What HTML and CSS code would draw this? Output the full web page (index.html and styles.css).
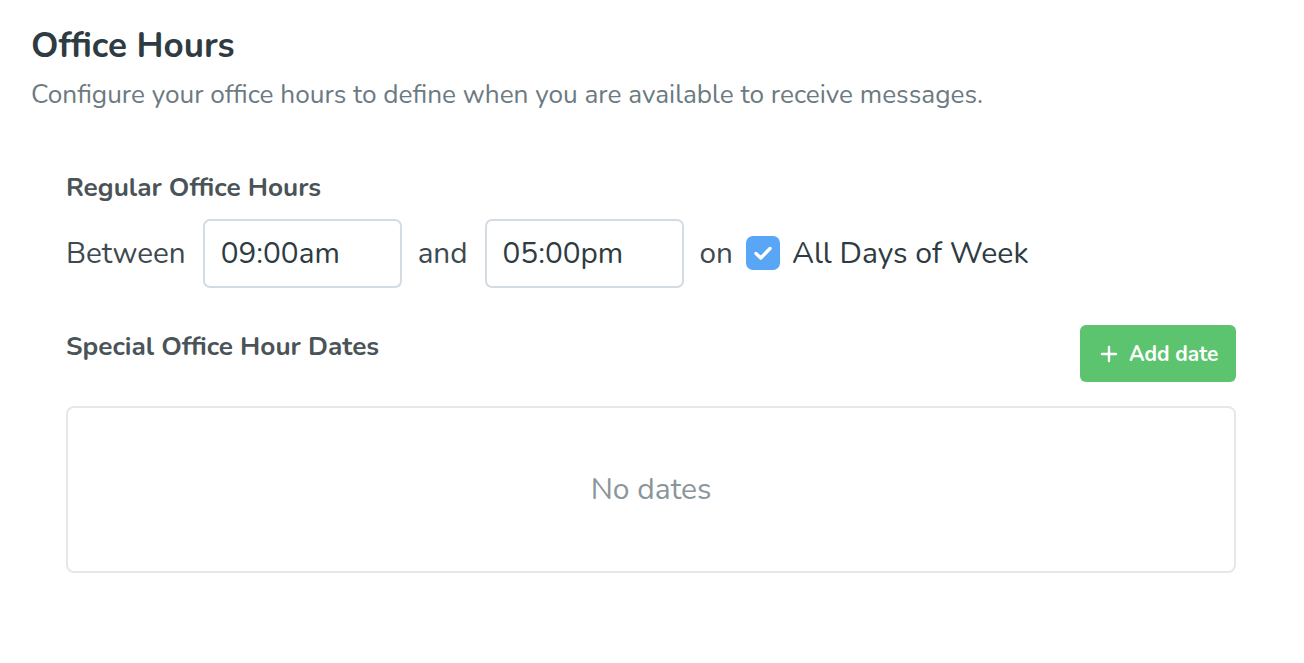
FILE: index.html
```html
<!DOCTYPE html>
<html>
<head>
<meta charset="utf-8">
<link rel="stylesheet" href="styles.css">
</head>
<body>
<div class="page">
  <h1 class="title">Office Hours</h1>
  <p class="desc">Configure your office hours to define when you are available to receive messages.</p>
  <div class="section">
    <h2 class="label">Regular Office Hours</h2>
    <div class="row">
      <span class="word">Between</span>
      <div class="input">09:00am</div>
      <span class="word">and</span>
      <div class="input">05:00pm</div>
      <span class="word">on</span>
      <span class="check"><svg width="28" height="28" viewBox="0 0 28 28"><path d="M7 14.5 L11.8 19 L21 9.5" fill="none" stroke="#fff" stroke-width="3.4" stroke-linecap="round" stroke-linejoin="round"/></svg></span>
      <span class="word days">All Days of Week</span>
    </div>
    <div class="special-head">
      <h2 class="label">Special Office Hour Dates</h2>
      <button class="add"><svg width="18" height="18" viewBox="0 0 18 18"><path d="M9 2 V16 M2 9 H16" stroke="#fff" stroke-width="2.4" stroke-linecap="round"/></svg><span>Add date</span></button>
    </div>
    <div class="empty">No dates</div>
  </div>
</div>
</body>
</html>
```
FILE: styles.css
```css
* { box-sizing: border-box; }
body {
  margin: 0;
  background: #fff;
  font-family: "Nunito", "Lato", "Open Sans", sans-serif;
}
.page {
  padding: 26px 31px 0 31px;
}
.title {
  margin: 0;
  font-size: 35px;
  font-weight: 700;
  color: #2e3b42;
  line-height: 40px;
}
.desc {
  margin: 9px 0 0 0;
  font-size: 26.2px;
  color: #6c7a82;
  line-height: 40px;
}
.section {
  margin: 58px 0 0 35px;
  width: 1170px;
}
.label {
  margin: 0;
  font-size: 26.2px;
  font-weight: 700;
  color: #4a5358;
  line-height: 30px;
}
.row {
  display: flex;
  align-items: center;
  margin-top: 15px;
  height: 70px;
}
.word {
  font-size: 29.7px;
  color: #3e4a50;
}
.input {
  width: 199px;
  height: 69px;
  margin: 0 16px 0 17px;
  border: 2px solid #d3dbe3;
  border-radius: 7px;
  padding: 0 16px;
  display: flex;
  align-items: center;
  font-size: 29.7px;
  color: #2e3b42;
}
.check {
  width: 34px;
  height: 34px;
  border-radius: 7px;
  background: #58a6f5;
  margin: 0 12px 0 13px;
  display: flex;
  align-items: center;
  justify-content: center;
}
.days { color: #2e3b42; font-size: 30.2px; }
.special-head {
  display: flex;
  justify-content: space-between;
  align-items: flex-start;
  margin-top: 37px;
}
.special-head .label { margin-top: 7px; }
.add {
  display: flex;
  align-items: center;
  gap: 11px;
  height: 57px;
  width: 156px;
  padding: 0 0 0 20px;
  border: none;
  border-radius: 6px;
  background: #5cc46f;
  color: #fff;
  font-family: inherit;
  font-size: 20.9px;
  font-weight: 700;
}
.empty {
  margin-top: 24px;
  height: 167px;
  border: 2px solid #e5e8ea;
  border-radius: 8px;
  display: flex;
  align-items: center;
  justify-content: center;
  font-size: 30px;
  color: #8b969c;
}
```
